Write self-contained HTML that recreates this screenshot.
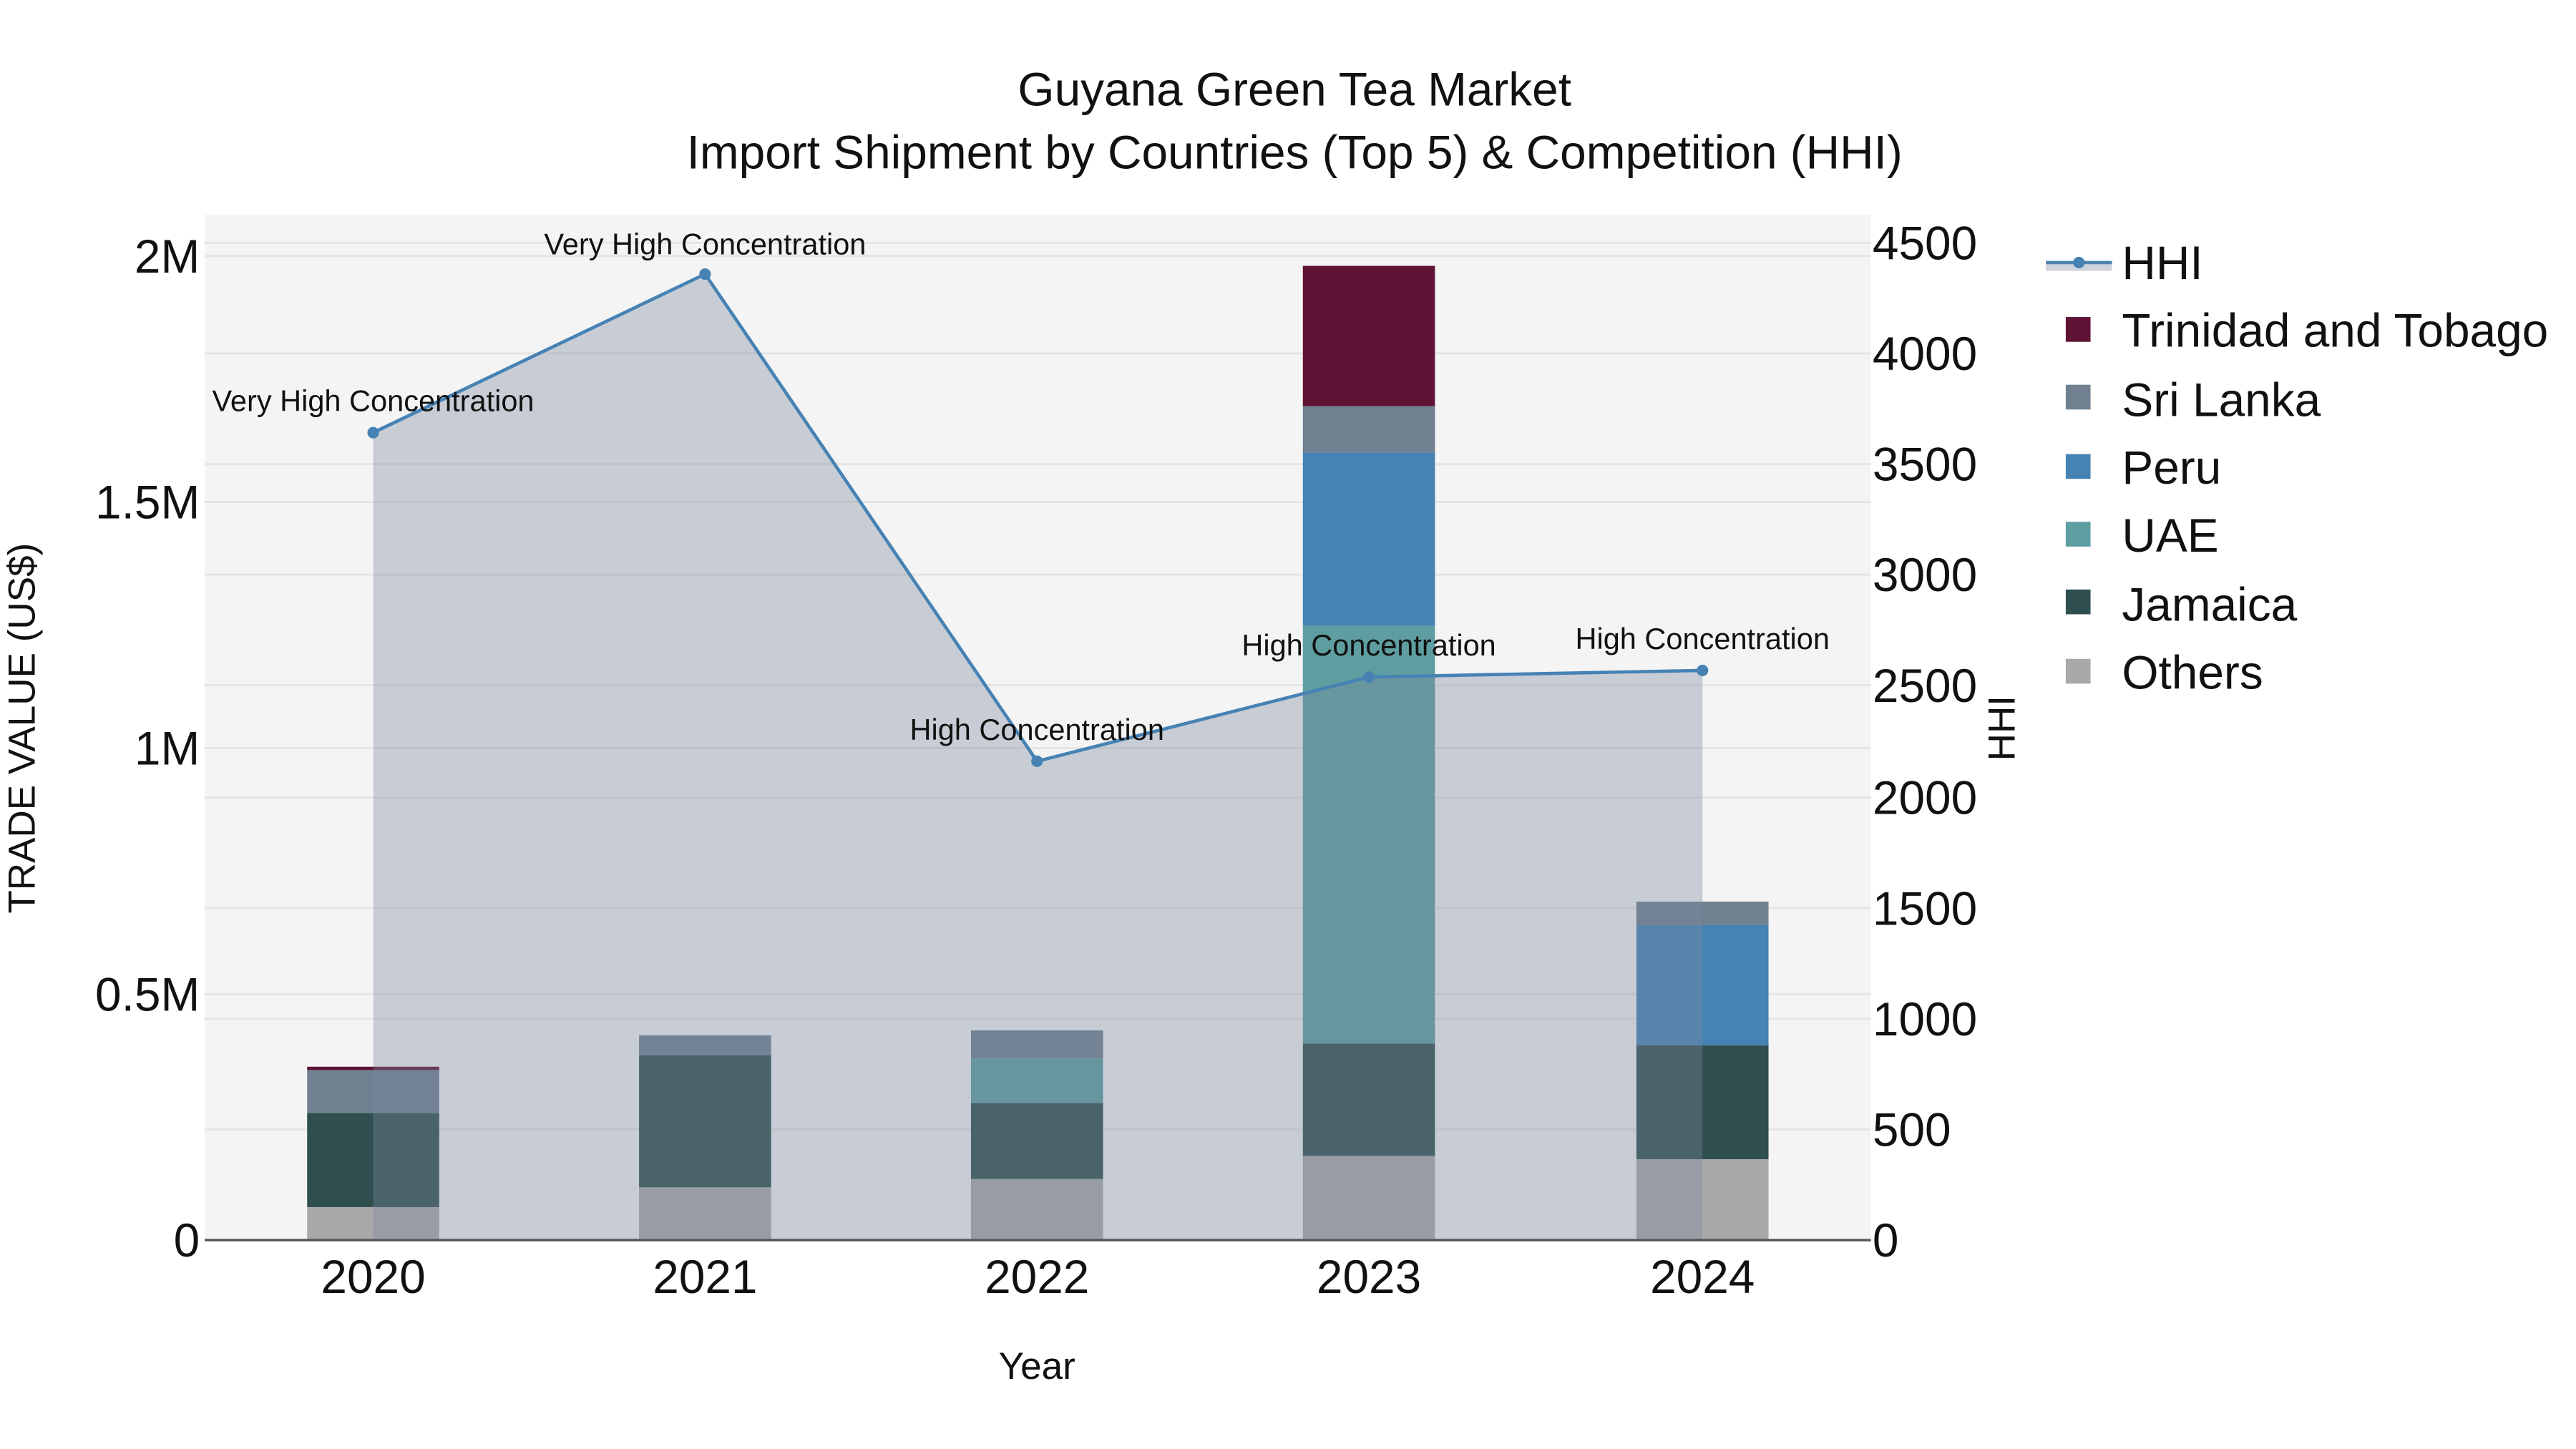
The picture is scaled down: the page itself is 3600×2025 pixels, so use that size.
<!DOCTYPE html>
<html><head><meta charset="utf-8"><style>
html,body{margin:0;padding:0;background:#fff;}
svg{display:block;}
text{font-family:"Liberation Sans",sans-serif;fill:#111;}
</style></head><body>
<svg width="3600" height="2025" viewBox="0 0 1560 877.5" xmlns="http://www.w3.org/2000/svg">
<rect x="0" y="0" width="1560" height="877.5" fill="#fff"/>
<rect x="124" y="130" width="1009" height="621" fill="#f4f4f4"/>
<g stroke="#e4e4e4" stroke-width="1.2">
<line x1="124" x2="1133" y1="602" y2="602"/><line x1="124" x2="1133" y1="453" y2="453"/>
<line x1="124" x2="1133" y1="304" y2="304"/><line x1="124" x2="1133" y1="155" y2="155"/>
<line x1="124" x2="1133" y1="684" y2="684"/><line x1="124" x2="1133" y1="617" y2="617"/>
<line x1="124" x2="1133" y1="550" y2="550"/><line x1="124" x2="1133" y1="483" y2="483"/>
<line x1="124" x2="1133" y1="415" y2="415"/><line x1="124" x2="1133" y1="348" y2="348"/>
<line x1="124" x2="1133" y1="281" y2="281"/><line x1="124" x2="1133" y1="214" y2="214"/>
<line x1="124" x2="1133" y1="147" y2="147"/>
</g>
<g>
<rect x="186" y="731" width="80" height="20" fill="#a9a9a9"/>
<rect x="186" y="674" width="80" height="57" fill="#2f4f4f"/>
<rect x="186" y="648" width="80" height="26" fill="#708090"/>
<rect x="186" y="646" width="80" height="2" fill="#5f1335"/>

<rect x="387" y="719" width="80" height="32" fill="#a9a9a9"/>
<rect x="387" y="639" width="80" height="80" fill="#2f4f4f"/>
<rect x="387" y="627" width="80" height="12" fill="#708090"/>

<rect x="588" y="714" width="80" height="37" fill="#a9a9a9"/>
<rect x="588" y="668" width="80" height="46" fill="#2f4f4f"/>
<rect x="588" y="641" width="80" height="27" fill="#5f9ea0"/>
<rect x="588" y="624" width="80" height="17" fill="#708090"/>

<rect x="789" y="700" width="80" height="51" fill="#a9a9a9"/>
<rect x="789" y="632" width="80" height="68" fill="#2f4f4f"/>
<rect x="789" y="379" width="80" height="253" fill="#5f9ea0"/>
<rect x="789" y="274" width="80" height="105" fill="#4682b4"/>
<rect x="789" y="246" width="80" height="28" fill="#708090"/>
<rect x="789" y="161" width="80" height="85" fill="#5f1335"/>

<rect x="991" y="702" width="80" height="49" fill="#a9a9a9"/>
<rect x="991" y="633" width="80" height="69" fill="#2f4f4f"/>
<rect x="991" y="560" width="80" height="73" fill="#4682b4"/>
<rect x="991" y="546" width="80" height="14" fill="#708090"/>
</g>
<polygon points="226,751 226,262 427,166 628,461 829,410 1031,406 1031,751" fill="rgb(122,136,158)" fill-opacity="0.36"/>
<line x1="124" x2="1133" y1="751" y2="751" stroke="#555" stroke-width="1.5"/>
<polyline points="226,262 427,166 628,461 829,410 1031,406" fill="none" stroke="#4682b4" stroke-width="2"/>
<g fill="#4682b4">
<circle cx="226" cy="262" r="3.5"/><circle cx="427" cy="166" r="3.5"/><circle cx="628" cy="461" r="3.5"/>
<circle cx="829" cy="410" r="3.5"/><circle cx="1031" cy="406" r="3.5"/>
</g>
<g font-size="18" text-anchor="middle">
<text x="226" y="249">Very High Concentration</text>
<text x="427" y="154">Very High Concentration</text>
<text x="628" y="448">High Concentration</text>
<text x="829" y="397">High Concentration</text>
<text x="1031" y="393">High Concentration</text>
</g>
<g font-size="28.5" text-anchor="middle">
<text x="784" y="64">Guyana Green Tea Market</text>
<text x="784" y="102">Import Shipment by Countries (Top 5) &amp; Competition (HHI)</text>
</g>
<g font-size="28.5" text-anchor="end">
<text x="121" y="761">0</text>
<text x="121" y="612">0.5M</text>
<text x="121" y="463">1M</text>
<text x="121" y="314">1.5M</text>
<text x="121" y="165">2M</text>
</g>
<g font-size="28.5" text-anchor="start">
<text x="1134" y="761">0</text>
<text x="1134" y="694">500</text>
<text x="1134" y="627">1000</text>
<text x="1134" y="560">1500</text>
<text x="1134" y="493">2000</text>
<text x="1134" y="425">2500</text>
<text x="1134" y="358">3000</text>
<text x="1134" y="291">3500</text>
<text x="1134" y="224">4000</text>
<text x="1134" y="157">4500</text>
</g>
<g font-size="28.5" text-anchor="middle">
<text x="226" y="783">2020</text>
<text x="427" y="783">2021</text>
<text x="628" y="783">2022</text>
<text x="829" y="783">2023</text>
<text x="1031" y="783">2024</text>
</g>
<text x="628" y="835" font-size="23" text-anchor="middle">Year</text>
<text transform="translate(21,441) rotate(-90)" font-size="23" text-anchor="middle">TRADE VALUE (US$)</text>
<text transform="translate(1220,441) rotate(-90)" font-size="23" text-anchor="middle">HHI</text>
<line x1="1239" x2="1279" y1="159" y2="159" stroke="#4682b4" stroke-width="2"/>
<rect x="1239" y="159" width="40" height="5" fill="rgb(122,136,158)" fill-opacity="0.36"/>
<circle cx="1259" cy="159" r="3.5" fill="#4682b4"/>
<rect x="1251" y="192" width="15" height="15" fill="#5f1335"/>
<rect x="1251" y="233" width="15" height="15" fill="#708090"/>
<rect x="1251" y="275" width="15" height="15" fill="#4682b4"/>
<rect x="1251" y="316" width="15" height="15" fill="#5f9ea0"/>
<rect x="1251" y="357" width="15" height="15" fill="#2f4f4f"/>
<rect x="1251" y="399" width="15" height="15" fill="#a9a9a9"/>
<g font-size="28.5">
<text x="1285" y="169">HHI</text>
<text x="1285" y="210">Trinidad and Tobago</text>
<text x="1285" y="252">Sri Lanka</text>
<text x="1285" y="293">Peru</text>
<text x="1285" y="334">UAE</text>
<text x="1285" y="376">Jamaica</text>
<text x="1285" y="417">Others</text>
</g>
</svg>
</body></html>
